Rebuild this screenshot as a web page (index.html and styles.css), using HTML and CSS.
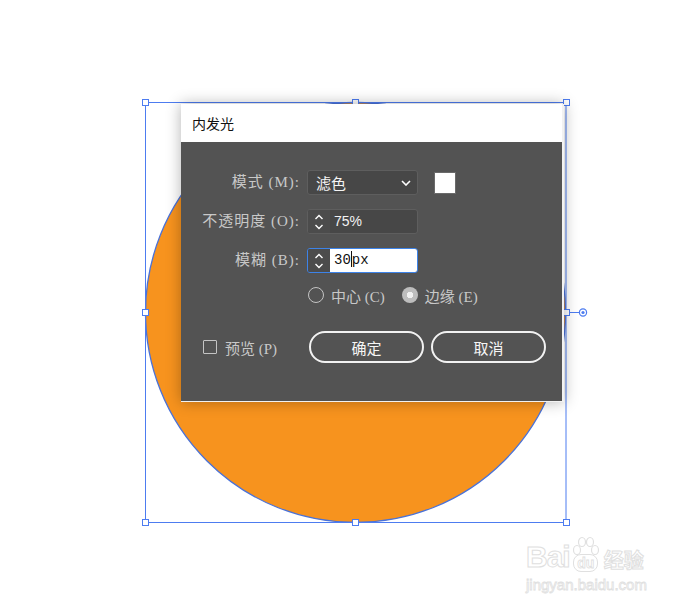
FILE: index.html
```html
<!DOCTYPE html>
<html lang="zh">
<head>
<meta charset="utf-8">
<title>内发光</title>
<link rel="stylesheet" href="styles.css">
</head>
<body>
<div class="stage">
  <svg class="canvas" width="689" height="606" viewBox="0 0 689 606">
    <ellipse cx="355.5" cy="312.5" rx="210" ry="210" fill="#F7931E" stroke="#4a72d8" stroke-width="1.3"/>
    <rect x="145.5" y="102.5" width="420.5" height="420" fill="none" stroke="#4d7cf0" stroke-width="1"/>
    <g fill="#fff" stroke="#4d7cf0" stroke-width="1">
      <rect x="142.5" y="99.5" width="6" height="6"/>
      <rect x="352.5" y="99.5" width="6" height="6"/>
      <rect x="563.5" y="99.5" width="6" height="6"/>
      <rect x="142.5" y="309.5" width="6" height="6"/>
      <rect x="563.5" y="309.5" width="6" height="6"/>
      <rect x="142.5" y="519.5" width="6" height="6"/>
      <rect x="352.5" y="519.5" width="6" height="6"/>
      <rect x="563.5" y="519.5" width="6" height="6"/>
    </g>
    <line x1="569.5" y1="312.5" x2="579" y2="312.5" stroke="#4d7cf0"/>
    <circle cx="583" cy="312.5" r="3.6" fill="none" stroke="#4d7cf0" stroke-width="1.2"/>
    <circle cx="583" cy="312.5" r="1.6" fill="#4d7cf0"/>
  </svg>

  <div class="dialog">
    <div class="titlebar">内发光</div>
    <div class="panel">
      <div class="row">
        <span class="label">模式 (M):</span>
        <div class="select">
          <span class="select-text">滤色</span>
          <svg class="chev" width="10" height="6" viewBox="0 0 10 6"><path d="M1 1 L5 5 L9 1" fill="none" stroke="#fff" stroke-width="1.6"/></svg>
        </div>
        <span class="swatch"></span>
      </div>
      <div class="row">
        <span class="label">不透明度 (O):</span>
        <div class="spin">
          <span class="arrows">
            <svg width="10" height="18" viewBox="0 0 10 18"><path d="M1.5 6 L5 2.5 L8.5 6 M1.5 12 L5 15.5 L8.5 12" fill="none" stroke="#fff" stroke-width="1.4"/></svg>
          </span>
          <span class="spin-value">75%</span>
        </div>
      </div>
      <div class="row">
        <span class="label">模糊 (B):</span>
        <div class="spin spin-active">
          <span class="arrows">
            <svg width="10" height="18" viewBox="0 0 10 18"><path d="M1.5 6 L5 2.5 L8.5 6 M1.5 12 L5 15.5 L8.5 12" fill="none" stroke="#fff" stroke-width="1.4"/></svg>
          </span>
          <span class="spin-value spin-value-active">30<span class="caret"></span>px</span>
        </div>
      </div>
      <div class="radios">
        <span class="radio-item"><span class="radio"></span>中心 (C)</span>
        <span class="radio-item"><span class="radio radio-on"></span>边缘 (E)</span>
      </div>
      <div class="actions">
        <span class="check-item"><span class="checkbox"></span>预览 (P)</span>
        <span class="btn btn-ok">确定</span>
        <span class="btn">取消</span>
      </div>
    </div>
  </div>

  <div class="watermark">
    <div class="wm-top">
      <span class="wm-bai">Bai</span>
      <span class="wm-du">
        <svg class="paw" width="34" height="22" viewBox="0 0 34 22">
          <g fill="#fff" stroke="#e0e0e0" stroke-width="1.2">
            <ellipse cx="8" cy="14" rx="3.5" ry="4.5"/>
            <ellipse cx="13" cy="6" rx="3.5" ry="4.5"/>
            <ellipse cx="21" cy="6" rx="3.5" ry="4.5"/>
            <ellipse cx="26" cy="14" rx="3.5" ry="4.5"/>
          </g>
        </svg>
        <span class="wm-du-text">du</span>
      </span>
      <span class="wm-jy">经验</span>
    </div>
    <div class="wm-url">jingyan.baidu.com</div>
  </div>
</div>
</body>
</html>
```

FILE: styles.css
```css
html, body {
  margin: 0;
  padding: 0;
  background: #ffffff;
}

.stage {
  position: relative;
  width: 689px;
  height: 606px;
  overflow: hidden;
  font-family: "Liberation Serif", "Noto Sans CJK SC", serif;
}

.canvas {
  position: absolute;
  left: 0;
  top: 0;
}

.dialog {
  position: absolute;
  left: 181px;
  top: 104px;
  width: 383px;
  height: 298px;
  box-sizing: border-box;
  display: flex;
  flex-direction: column;
  background: #ffffff;
  border-right: 2px solid #f2f2f2;
  border-bottom: 1px solid #f2f2f2;
  box-shadow: 0 0 14px rgba(0, 0, 0, 0.3);
}

.titlebar {
  height: 38px;
  box-sizing: border-box;
  padding: 10px 0 0 11px;
  font-family: "Noto Sans CJK SC", sans-serif;
  font-size: 14px;
  line-height: 18px;
  color: #111;
}

.panel {
  flex: 1;
  background: #535353;
  display: flex;
  flex-direction: column;
  padding-top: 28px;
}

.row {
  display: flex;
  align-items: center;
  height: 25px;
  margin-bottom: 14px;
}

.label {
  width: 121px;
  box-sizing: border-box;
  padding-right: 2px;
  text-align: right;
  color: #c8c8c8;
  font-size: 15px;
  letter-spacing: 1px;
  line-height: 25px;
  margin-right: 5px;
  white-space: nowrap;
}

.select {
  width: 111px;
  height: 25px;
  box-sizing: border-box;
  border: 1px solid #5e5e5e;
  border-radius: 3px;
  background: #474747;
  display: flex;
  align-items: center;
  justify-content: space-between;
  padding: 0 6px 0 8px;
}

.select-text {
  font-family: "Noto Sans CJK SC", sans-serif;
  font-size: 15px;
  color: #f4f4f4;
}

.chev {
  display: block;
}

.swatch {
  width: 22px;
  height: 22px;
  margin-left: 16px;
  background: #ffffff;
  box-sizing: border-box;
  border: 1px solid #6a6a6a;
}

.spin {
  width: 111px;
  height: 25px;
  box-sizing: border-box;
  border: 1px solid #5e5e5e;
  border-radius: 3px;
  background: #474747;
  display: flex;
  overflow: hidden;
}

.arrows {
  width: 22px;
  background: #4c4c4c;
  display: flex;
  align-items: center;
  justify-content: center;
}

.arrows svg {
  display: block;
}

.spin-value {
  flex: 1;
  padding-left: 4px;
  font-family: "Liberation Sans", sans-serif;
  font-size: 14px;
  line-height: 23px;
  color: #f2f2f2;
}

.spin-active {
  border: 1px solid #3d83e8;
}

.spin-value-active {
  background: #ffffff;
  color: #111;
  font-family: "Liberation Mono", monospace;
  font-size: 14px;
}

.caret {
  display: inline-block;
  width: 1px;
  height: 16px;
  background: #111;
  vertical-align: -3px;
}

.radios {
  display: flex;
  align-items: center;
  height: 18px;
  margin-top: -1px;
  padding-left: 127px;
  color: #c8c8c8;
  font-size: 15px;
}

.radio-item {
  display: flex;
  align-items: center;
  gap: 7px;
  margin-right: 17px;
  white-space: nowrap;
}

.radio {
  width: 16px;
  height: 16px;
  box-sizing: border-box;
  border: 1.5px solid #c4c4c4;
  border-radius: 50%;
}

.radio-on {
  border: none;
  background: radial-gradient(circle, #f0f0f0 0 3px, #bdbdbd 3.5px);
}

.actions {
  display: flex;
  align-items: center;
  margin-top: 27px;
  padding-left: 22px;
}

.check-item {
  display: flex;
  align-items: center;
  gap: 8px;
  width: 106px;
  color: #c8c8c8;
  font-size: 15px;
  white-space: nowrap;
}

.checkbox {
  width: 14px;
  height: 14px;
  box-sizing: border-box;
  border: 1.5px solid #c4c4c4;
  border-radius: 1px;
}

.btn {
  width: 115px;
  height: 32px;
  box-sizing: border-box;
  border: 2px solid #f2f2f2;
  border-radius: 16px;
  display: flex;
  align-items: center;
  justify-content: center;
  font-family: "Noto Sans CJK SC", sans-serif;
  font-size: 15px;
  font-weight: 400;
  color: #f6f6f6;
}

.btn-ok {
  margin-right: 7px;
}

.watermark {
  position: absolute;
  left: 526px;
  top: 532px;
  width: 130px;
  font-family: "Liberation Sans", "Noto Sans CJK SC", sans-serif;
  color: #ffffff;
  -webkit-text-stroke: 1px #e0e0e0;
}

.wm-top {
  display: flex;
  align-items: flex-end;
  height: 40px;
}

.wm-bai {
  font-size: 30px;
  font-weight: 700;
  line-height: 30px;
  letter-spacing: -1px;
}

.wm-du {
  position: relative;
  display: flex;
  flex-direction: column;
  align-items: center;
  width: 32px;
}

.paw {
  display: block;
  margin-bottom: -4px;
}

.wm-du-text {
  font-size: 14px;
  font-weight: 700;
  line-height: 16px;
  padding: 0 3px;
  border: 1.2px solid #e0e0e0;
  border-radius: 8px;
  -webkit-text-stroke: 0.8px #e0e0e0;
}

.wm-jy {
  font-family: "Noto Sans CJK SC", sans-serif;
  font-size: 20px;
  font-weight: 700;
  line-height: 24px;
  margin-left: 2px;
}

.wm-url {
  font-size: 15px;
  line-height: 18px;
  margin-top: 4px;
  -webkit-text-stroke: 0.8px #e0e0e0;
}
```
